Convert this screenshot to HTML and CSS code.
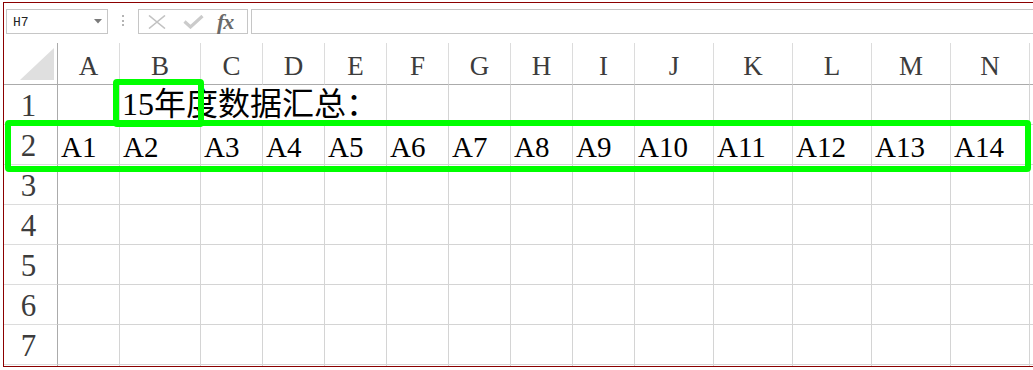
FILE: index.html
```html
<!DOCTYPE html>
<html>
<head>
<meta charset="utf-8">
<link rel="stylesheet" href="styles.css">
</head>
<body>
<div class="frame">
  <div class="toolbar">
    <div class="namebox">
      <span class="ref">H7</span>
      <svg class="drop" width="8" height="5" viewBox="0 0 8 5"><path d="M0 0H8L4 4.5Z" fill="#7a7a7a"/></svg>
    </div>
    <div class="dots"><i></i><i></i><i></i></div>
    <div class="fnbtns">
      <svg class="ico-x" width="18" height="14" viewBox="0 0 18 14"><path d="M1 0.5L17 13.5M17 0.5L1 13.5" stroke="#c2c2c2" stroke-width="1.6" fill="none"/></svg>
      <svg class="ico-ok" width="21" height="14" viewBox="0 0 21 14"><path d="M1.5 6.5L7.5 12L19.5 1" stroke="#cbcbcb" stroke-width="3.2" fill="none"/></svg>
      <span class="fx">fx</span>
    </div>
    <div class="formula"></div>
  </div>

  <div class="sheet">
    <div class="corner"><svg width="53" height="41" viewBox="0 0 53 41"><path d="M16 37L50 5V37Z" fill="#dfdfdf"/></svg></div>
    <div class="colh">A</div><div class="colh">B</div><div class="colh">C</div><div class="colh">D</div><div class="colh">E</div><div class="colh">F</div><div class="colh">G</div><div class="colh">H</div><div class="colh">I</div><div class="colh">J</div><div class="colh">K</div><div class="colh">L</div><div class="colh">M</div><div class="colh">N</div><div class="colh"></div>

    <div class="rowh">1</div>
    <div class="cell"></div><div class="cell title span4">15年度数据汇总：</div><div class="cell"></div><div class="cell"></div><div class="cell"></div><div class="cell"></div><div class="cell"></div><div class="cell"></div><div class="cell"></div><div class="cell"></div><div class="cell"></div><div class="cell"></div>

    <div class="rowh">2</div>
    <div class="cell">A1</div><div class="cell">A2</div><div class="cell">A3</div><div class="cell">A4</div><div class="cell">A5</div><div class="cell">A6</div><div class="cell">A7</div><div class="cell">A8</div><div class="cell">A9</div><div class="cell">A10</div><div class="cell">A11</div><div class="cell">A12</div><div class="cell">A13</div><div class="cell">A14</div><div class="cell"></div>

    <div class="rowh">3</div>
    <div class="cell"></div><div class="cell"></div><div class="cell"></div><div class="cell"></div><div class="cell"></div><div class="cell"></div><div class="cell"></div><div class="cell"></div><div class="cell"></div><div class="cell"></div><div class="cell"></div><div class="cell"></div><div class="cell"></div><div class="cell"></div><div class="cell"></div>

    <div class="rowh">4</div>
    <div class="cell"></div><div class="cell"></div><div class="cell"></div><div class="cell"></div><div class="cell"></div><div class="cell"></div><div class="cell"></div><div class="cell"></div><div class="cell"></div><div class="cell"></div><div class="cell"></div><div class="cell"></div><div class="cell"></div><div class="cell"></div><div class="cell"></div>

    <div class="rowh">5</div>
    <div class="cell"></div><div class="cell"></div><div class="cell"></div><div class="cell"></div><div class="cell"></div><div class="cell"></div><div class="cell"></div><div class="cell"></div><div class="cell"></div><div class="cell"></div><div class="cell"></div><div class="cell"></div><div class="cell"></div><div class="cell"></div><div class="cell"></div>

    <div class="rowh">6</div>
    <div class="cell"></div><div class="cell"></div><div class="cell"></div><div class="cell"></div><div class="cell"></div><div class="cell"></div><div class="cell"></div><div class="cell"></div><div class="cell"></div><div class="cell"></div><div class="cell"></div><div class="cell"></div><div class="cell"></div><div class="cell"></div><div class="cell"></div>

    <div class="rowh">7</div>
    <div class="cell"></div><div class="cell"></div><div class="cell"></div><div class="cell"></div><div class="cell"></div><div class="cell"></div><div class="cell"></div><div class="cell"></div><div class="cell"></div><div class="cell"></div><div class="cell"></div><div class="cell"></div><div class="cell"></div><div class="cell"></div><div class="cell"></div>

    <div class="rowh"></div>
    <div class="cell"></div><div class="cell"></div><div class="cell"></div><div class="cell"></div><div class="cell"></div><div class="cell"></div><div class="cell"></div><div class="cell"></div><div class="cell"></div><div class="cell"></div><div class="cell"></div><div class="cell"></div><div class="cell"></div><div class="cell"></div><div class="cell"></div>
  </div>

  <div class="hl hl-cell"></div>
  <div class="hl hl-row"></div>
</div>
</body>
</html>
```

FILE: styles.css
```css
html, body {
  margin: 0;
  padding: 0;
  background: #ffffff;
  overflow: hidden;
}
body {
  width: 1033px;
  height: 370px;
  font-family: "Liberation Serif", "Noto Sans CJK SC", serif;
}
.frame {
  position: relative;
  margin: 2px 0 0 3px;
  height: 363px;
  border-top: 1px solid #8b0000;
  border-left: 1px solid #8b0000;
  border-bottom: 1px solid #8b0000;
  overflow: hidden;
  background: #fff;
}

/* toolbar */
.toolbar {
  height: 40px;
  display: flex;
  align-items: flex-start;
  padding-top: 6px;
  box-sizing: border-box;
}
.namebox {
  margin-left: 2px;
  width: 102px;
  height: 25px;
  box-sizing: border-box;
  border: 1px solid #c6c6c6;
  display: flex;
  align-items: center;
  justify-content: space-between;
  padding: 0 5px 0 6px;
}
.ref {
  font-family: "Liberation Mono", monospace;
  font-size: 13px;
  color: #222;
  padding-top: 1px;
}
.drop {
  display: block;
}
.dots {
  margin-left: 14px;
  width: 2px;
  padding-top: 6px;
  display: flex;
  flex-direction: column;
  gap: 2.5px;
}
.dots i {
  display: block;
  width: 2px;
  height: 2px;
  background: #b4b4b4;
}
.fnbtns {
  margin-left: 14px;
  width: 110px;
  height: 25px;
  box-sizing: border-box;
  border: 1px solid #c6c6c6;
  display: flex;
  align-items: center;
}
.ico-x {
  margin-left: 9px;
  display: block;
}
.ico-ok {
  margin-left: 17px;
  display: block;
}
.fx {
  margin-left: 13px;
  font-family: "Liberation Serif", serif;
  font-style: italic;
  font-weight: bold;
  font-size: 22px;
  line-height: 22px;
  color: #6a6a6a;
  letter-spacing: -1px;
}
.formula {
  margin-left: 3px;
  flex: 1;
  height: 25px;
  box-sizing: border-box;
  border: 1px solid #c6c6c6;
  border-right: none;
}

/* sheet */
.sheet {
  display: grid;
  grid-template-columns: 54px 62px 81px repeat(7, 62px) repeat(5, 79px) 1fr;
  grid-template-rows: 42px repeat(8, 40px);
}
.sheet > div {
  box-sizing: border-box;
  min-width: 0;
}
.corner {
  border-right: 1px solid #ababab;
  border-bottom: 1px solid #ababab;
}
.corner svg {
  display: block;
}
.colh {
  border-right: 1px solid #dcdcdc;
  border-bottom: 1px solid #ababab;
  text-align: center;
  font-size: 27px;
  line-height: 36px;
  padding-top: 5px;
  color: #3c3c3c;
}
.rowh {
  border-right: 1px solid #ababab;
  border-bottom: 1px solid #dcdcdc;
  text-align: center;
  font-size: 31px;
  line-height: 35px;
  padding-top: 3px;
  padding-right: 4px;
  color: #3c3c3c;
}
.cell {
  border-right: 1px solid #d4d4d4;
  border-bottom: 1px solid #d4d4d4;
  font-size: 29px;
  line-height: 35px;
  padding: 5px 0 0 3px;
  white-space: nowrap;
  color: #000;
}
.title {
  font-size: 32px;
  padding-top: 2px;
  padding-left: 2px;
}
.span4 {
  grid-column: span 4;
}

/* green highlight rectangles (overlay) */
.hl {
  position: absolute;
  box-sizing: border-box;
  border: 6px solid #00ff00;
  border-radius: 4px;
  pointer-events: none;
}
.hl-cell {
  left: 109px;
  top: 76px;
  width: 91px;
  height: 48px;
}
.hl-row {
  left: 1px;
  top: 117px;
  width: 1026px;
  height: 52px;
}
```
